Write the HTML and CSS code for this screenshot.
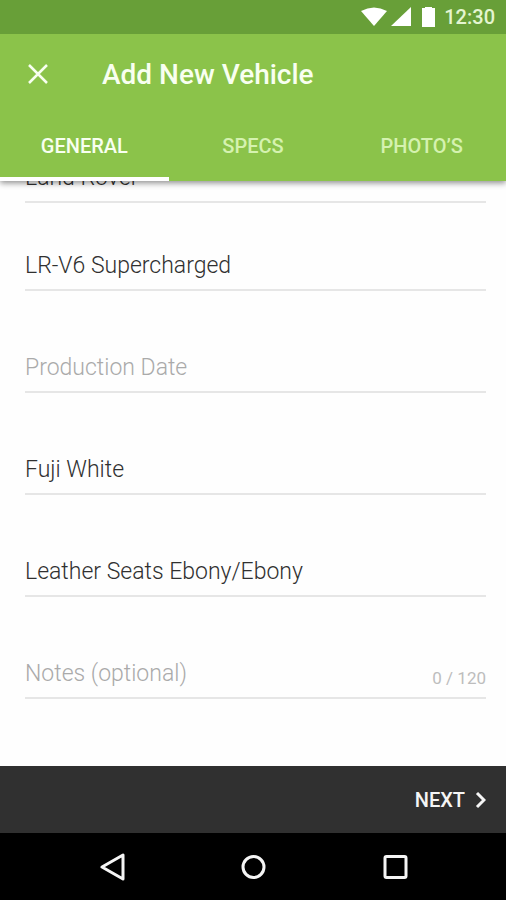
FILE: index.html
```html
<!DOCTYPE html>
<html lang="en">
<head>
<meta charset="utf-8">
<meta name="viewport" content="width=device-width, initial-scale=1">
<title>Add New Vehicle</title>
<link rel="stylesheet" href="styles.css">
</head>
<body>
<header class="top">
  <div class="status">
    <svg width="26" height="20" viewBox="0 0 26 20" aria-hidden="true"><path d="M0 4Q13-3 26 4L13 19Z"/></svg>
    <svg width="20" height="20" viewBox="0 0 20 20" aria-hidden="true"><path d="M20 0V19H0Z"/></svg>
    <svg class="battery" width="13" height="20" viewBox="0 0 13 20" aria-hidden="true"><path d="M3 0H10V1H13V20H0V1H3Z"/></svg>
    <span class="time">12:30</span>
  </div>
  <div class="bar">
    <button class="close" type="button" aria-label="Close">
      <svg width="20" height="20" viewBox="0 0 20 20"><path d="M1 1L19 19M19 1L1 19"/></svg>
    </button>
    <h1 class="title">Add New Vehicle</h1>
  </div>
  <nav class="tabs">
    <button class="tab tab-active" type="button">GENERAL</button>
    <button class="tab" type="button">SPECS</button>
    <button class="tab" type="button">PHOTO’S</button>
  </nav>
</header>
<main class="content">
  <form class="form" id="vehicle">
    <div class="field field-first"><input type="text" aria-label="Make" value="Land Rover"></div>
    <div class="field field-model"><input type="text" aria-label="Model" value="LR-V6 Supercharged"></div>
    <div class="field"><input type="text" aria-label="Production Date" placeholder="Production Date"></div>
    <div class="field"><input type="text" aria-label="Color" value="Fuji White"></div>
    <div class="field"><input type="text" aria-label="Interior" value="Leather Seats Ebony/Ebony"></div>
    <div class="field"><input type="text" aria-label="Notes" placeholder="Notes (optional)"><span class="count">0 / 120</span></div>
  </form>
</main>
<footer class="actions">
  <button class="next" type="submit" form="vehicle">NEXT
    <svg width="11" height="18" viewBox="0 0 11 18" aria-hidden="true"><path d="M2 2L9 9L2 16"/></svg>
  </button>
</footer>
<nav class="system">
  <button type="button" aria-label="Back"><svg width="28" height="28" viewBox="0 0 28 28"><path d="M26 2V26L5 14Z"/></svg></button>
  <button type="button" aria-label="Home"><svg width="28" height="28" viewBox="0 0 28 28"><circle cx="14.500" cy="14" r="10.500"/></svg></button>
  <button type="button" aria-label="Recent apps"><svg width="28" height="28" viewBox="0 0 28 28"><rect x="4" y="3.500" width="21" height="21" rx="1.500"/></svg></button>
</nav>
</body>
</html>
```
FILE: styles.css
```css
* { box-sizing: border-box; }

body {
  margin: 0;
  min-height: 100vh;
  display: flex;
  flex-direction: column;
  background: #fefefe;
  font-family: Roboto, sans-serif;
}

button {
  border: 0;
  padding: 0;
  background: none;
  color: inherit;
  font: inherit;
}

svg { display: block; }

.top {
  position: relative;
  z-index: 1;
  background: #8bc34a;
  color: #f8fff0;
  box-shadow: 0 2px 6px rgba(0, 0, 0, 0.45);
}

.status {
  display: flex;
  align-items: center;
  justify-content: flex-end;
  gap: 4px;
  height: 34px;
  padding-right: 11px;
  background: #689f38;
  fill: #ffffff;
}

.battery { margin: 0 5px 0 7px; }

.time {
  color: #e4f5d0;
  font-size: 20px;
  font-weight: 500;
}

.bar {
  display: flex;
  align-items: center;
  gap: 54px;
  height: 80px;
  padding-left: 28px;
}

.close {
  fill: none;
  stroke: #f8fff0;
  stroke-width: 2.5;
}

.title {
  margin: 0;
  font-size: 28px;
  font-weight: 500;
}

.tabs {
  display: grid;
  grid-template-columns: repeat(3, 1fr);
  height: 67px;
}

.tab {
  border-bottom: 4px solid transparent;
  color: #d5f2b0;
  font-size: 20px;
  font-weight: 500;
}

.tab-active {
  border-color: #ffffff;
  color: #f8fff0;
}

.content {
  flex: 1;
  overflow: hidden;
}

.form { padding: 0 20px 0 25px; }

.field {
  display: flex;
  align-items: flex-end;
  height: 51px;
  margin-top: 51px;
  border-bottom: 2px solid #e6e6e6;
}

.field-first { margin-top: -29px; }

.field-model { margin-top: 37px; }

.field input {
  flex: 1;
  min-width: 0;
  height: 49px;
  padding: 2px 0 0;
  border: 0;
  outline: 0;
  background: none;
  color: #303030;
  font: 300 23px/46px Roboto, sans-serif;
}

.field input::placeholder {
  color: #aaaaaa;
  opacity: 1;
}

.count {
  color: #bdbdbd;
  font-size: 17px;
  line-height: 38px;
}

.actions {
  display: flex;
  align-items: center;
  justify-content: flex-end;
  height: 67px;
  padding-right: 20px;
  background: #303030;
  color: #f5f5f5;
}

.next {
  display: flex;
  align-items: center;
  gap: 10px;
  font-size: 20px;
  font-weight: 500;
}

.next svg {
  fill: none;
  stroke: #f5f5f5;
  stroke-width: 3;
}

.system {
  display: flex;
  align-items: center;
  justify-content: center;
  gap: 114px;
  height: 67px;
  background: #000000;
}

.system svg {
  fill: none;
  stroke: #f5f5f5;
  stroke-width: 3;
  stroke-linejoin: round;
}
```
